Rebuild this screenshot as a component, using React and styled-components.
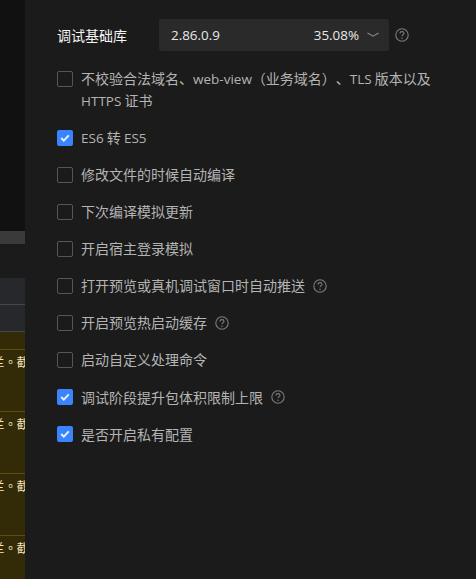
import React from "react";
import styled, { createGlobalStyle } from "styled-components";

const Global = createGlobalStyle`
  html, body { margin: 0; padding: 0; background: #1b1b1b; }
  body { width: 476px; height: 579px; overflow: hidden; }
  * { box-sizing: border-box; }
`;

const Page = styled.div`
  display: flex;
  width: 476px;
  height: 579px;
  overflow: hidden;
  font-family: "Noto Sans CJK SC", sans-serif;
  font-size: 14px;
  text-spacing-trim: space-all;
  background: #1b1b1b;
`;

const LeftStrip = styled.div`
  width: 25px;
  flex: none;
  display: flex;
  flex-direction: column;
  overflow: hidden;
`;

const PreviewArea = styled.div`
  height: 231px;
  flex: none;
  background: #111111;
`;

const ScrollBar = styled.div`
  height: 13px;
  flex: none;
  background: #3a3a3a;
`;

const Spacer = styled.div`
  height: 34px;
  flex: none;
  background: #1b1b1b;
`;

const TabRow = styled.div`
  height: ${(p) => p.$h}px;
  flex: none;
  background: #27282c;
  border-bottom: 1px solid #45464a;
`;

const LogArea = styled.div`
  flex: 1;
  background: #332a07;
  padding-top: 17px;
`;

const LogRow = styled.div`
  height: 62px;
  border-top: 1px solid #5c4d10;
  color: #fbe3b4;
  font-family: "Noto Sans CJK TC", sans-serif;
  font-size: 12px;
  line-height: 16px;
  padding-top: 4px;
  white-space: nowrap;
  overflow: hidden;
`;

const LogText = styled.span`
  display: block;
  margin-left: -7.5px;
`;

const Panel = styled.main`
  flex: 1;
  padding: 19px 0 0 32px;
  display: flex;
  flex-direction: column;
  background: #1b1b1b;
`;

const VersionRow = styled.div`
  display: flex;
  align-items: center;
  height: 32px;
  margin-bottom: 16.4px;
`;

const VersionLabel = styled.div`
  width: 102px;
  flex: none;
  color: #f5f5f5;
  font-weight: 400;
`;

const Select = styled.div`
  width: 230px;
  height: 32px;
  flex: none;
  display: flex;
  align-items: center;
  padding: 0 10px 0 12px;
  background: #2a2a2a;
  border-radius: 3px;
  color: #e8e8e8;
`;

const VersionValue = styled.span`
  flex: 1;
  font-family: "Open Sans", sans-serif;
  font-size: 13.4px;
`;

const Percent = styled.span`
  margin-right: 8px;
  font-family: "Open Sans", sans-serif;
  font-size: 13.4px;
`;

const Options = styled.div`
  display: flex;
  flex-direction: column;
  gap: 15.09px;
`;

const Option = styled.label`
  display: flex;
  align-items: flex-start;
  width: 384px;
  color: #b4b4b4;
  line-height: 22px;
`;

const Box = styled.span`
  width: 16px;
  height: 16px;
  flex: none;
  margin: 3.4px 8px 0 0;
  border-radius: 2px;
  border: ${(p) => (p.$on ? "none" : "1px solid #565656")};
  background: ${(p) => (p.$on ? "#3a84ff" : "transparent")};
  display: flex;
  align-items: center;
  justify-content: center;
`;

const LabelText = styled.span`
  flex: ${(p) => (p.$wrap ? "1" : "none")};
  margin: -0.5px 0 0.5px;
`;

const Latin = styled.span`
  font-family: "Open Sans", sans-serif;
  font-size: 13.5px;
  line-height: 0;
`;

const HelpWrap = styled.span`
  display: inline-flex;
  flex: none;
  margin: ${(p) => p.$m || "4px 0 0 8px"};
`;

const Chevron = () => (
  <svg width="12" height="6" viewBox="0 0 12 6" fill="none">
    <path d="M0.5 1 L6 4.2 L11.5 1" stroke="#8a8a8a" strokeWidth="1.1" />
  </svg>
);

const Check = () => (
  <svg width="12" height="10" viewBox="0 0 12 10" fill="none">
    <path d="M2.2 5 L4.8 7.6 L9.8 2.4" stroke="#e8f0ff" strokeWidth="2" />
  </svg>
);

const Help = ({ size = 14 }) => (
  <svg width={size} height={size} viewBox="0 0 14 14" fill="none">
    <circle cx="7" cy="7" r="6.2" stroke="#7c7c7c" strokeWidth="1.1" />
    <path
      d="M5 5.5 C5 4.2 6 3.6 7 3.6 C8.1 3.6 9 4.3 9 5.3 C9 6.6 7 6.7 7 8.3"
      stroke="#7c7c7c"
      strokeWidth="1.1"
    />
    <circle cx="7" cy="10.2" r="0.75" fill="#7c7c7c" />
  </svg>
);

const options = [
  {
    key: "domain",
    wrap: true,
    text: (
      <>
        不校验合法域名、<Latin>web-view</Latin>（业务域名）、<Latin>TLS</Latin> 版本以及{" "}
        <Latin>HTTPS</Latin> 证书
      </>
    ),
  },
  {
    key: "es6",
    on: true,
    text: (
      <>
        <Latin>ES6</Latin> 转 <Latin>ES5</Latin>
      </>
    ),
  },
  { key: "a", text: "修改文件的时候自动编译" },
  { key: "b", text: "下次编译模拟更新" },
  { key: "c", text: "开启宿主登录模拟" },
  { key: "d", text: "打开预览或真机调试窗口时自动推送", help: true },
  { key: "e", text: "开启预览热启动缓存", help: true },
  { key: "f", text: "启动自定义处理命令" },
  { key: "g", text: "调试阶段提升包体积限制上限", on: true, help: true },
  { key: "h", text: "是否开启私有配置", on: true },
];

export default function App() {
  return (
    <Page>
      <Global />
      <LeftStrip>
        <PreviewArea />
        <ScrollBar />
        <Spacer />
        <TabRow $h={27} />
        <TabRow $h={27} />
        <LogArea>
          {[0, 1, 2, 3].map((i) => (
            <LogRow key={i}>
              <LogText>兰。截</LogText>
            </LogRow>
          ))}
        </LogArea>
      </LeftStrip>
      <Panel>
        <VersionRow>
          <VersionLabel>调试基础库</VersionLabel>
          <Select>
            <VersionValue>2.86.0.9</VersionValue>
            <Percent>35.08%</Percent>
            <Chevron />
          </Select>
          <HelpWrap $m="0 0 0 6px">
            <Help />
          </HelpWrap>
        </VersionRow>
        <Options>
          {options.map((o) => (
            <Option key={o.key}>
              <Box $on={o.on}>{o.on && <Check />}</Box>
              <LabelText $wrap={o.wrap}>{o.text}</LabelText>
              {o.help && (
                <HelpWrap>
                  <Help />
                </HelpWrap>
              )}
            </Option>
          ))}
        </Options>
      </Panel>
    </Page>
  );
}
